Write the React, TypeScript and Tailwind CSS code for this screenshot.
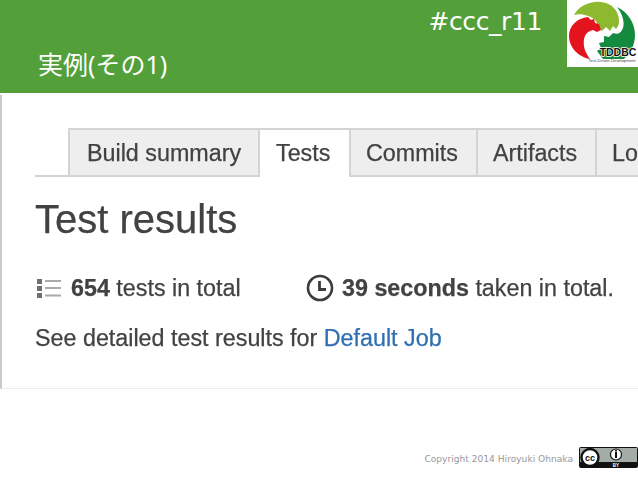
import React from "react";

const tabs = [
  { label: "Build summary", width: "w-[190px]", pad: "pl-[17px]", active: false },
  { label: "Tests", width: "w-[91px]", pad: "pl-[16px]", active: true },
  { label: "Commits", width: "w-[127px]", pad: "pl-[15px]", active: false },
  { label: "Artifacts", width: "w-[119px]", pad: "pl-[15px]", active: false },
  { label: "Log", width: "w-[60px]", pad: "pl-[15px]", active: false },
];

const TddbcLogo = () => (
  <svg width="71" height="67" viewBox="0 0 71 67" className="block">
    <rect width="71" height="67" fill="#fff" />
    {/* light green swirl */}
    <path d="M7 15C12 6 23 1 34 2C45 3 52 11 52 21C52 24 51 27 49 29L46 26L43 31L39 27L35 31L31 27C31 22 27 18 21 16C16 14 11 14 7 15Z" fill="#8DB92E" />
    {/* red swirl */}
    <path d="M2 36C2 26 10 18 21 17L24 20L27 19L28 23L32 24L34 30L30 32L26 30C21 31 18 34 17 39C16 47 18 52 23 59C11 57 2 47 2 36Z" fill="#E3141E" />
    {/* dark green swirl */}
    <path d="M50 7C61 12 68 23 68 35C68 44 64 53 57 59L36 59L30 51L34 48L32 43L37 42L37 36L42 37L46 33C51 35 54 33 56 28C58 22 55 13 50 7Z" fill="#138A3E" />
    <text x="51" y="55.5" fontSize="10.5" fontWeight="700" fill="#111" stroke="#fff" strokeWidth="1.5" paintOrder="stroke" textAnchor="middle" fontFamily="'Liberation Sans', sans-serif">TDDBC</text>
    <text x="45" y="61.5" fontSize="4.2" fill="#444" textAnchor="middle" fontFamily="'Liberation Sans', sans-serif">Test-Driven Development</text>
  </svg>
);

const ListIcon = () => (
  <svg width="24" height="19" viewBox="0 0 24 19" className="ml-[2px] block">
    <rect x="0" y="0" width="5" height="5" fill="#6f6f6f" />
    <rect x="0" y="7" width="5" height="5" fill="#6f6f6f" />
    <rect x="0" y="14" width="5" height="5" fill="#6f6f6f" />
    <rect x="8" y="1" width="16" height="2" fill="#aaa" />
    <rect x="8" y="8" width="16" height="2" fill="#aaa" />
    <rect x="8" y="15.5" width="16" height="2" fill="#aaa" />
  </svg>
);

const ClockIcon = () => (
  <svg width="28" height="28" viewBox="0 0 28 28" className="block">
    <circle cx="14" cy="14" r="12" fill="none" stroke="#3d3d3d" strokeWidth="2.6" />
    <path d="M13.5 7V15.5H20" fill="none" stroke="#3d3d3d" strokeWidth="2.8" />
  </svg>
);

const CcBadge = () => (
  <svg width="59" height="21" viewBox="0 0 59 21" className="block">
    <rect x="0.5" y="0.5" width="58" height="20" rx="1" fill="#a3aca5" stroke="#111" />
    <path d="M1 15H58V20H1Z" fill="#111" />
    <circle cx="11" cy="10.5" r="8.5" fill="#fff" stroke="#111" strokeWidth="2.4" />
    <text x="11" y="13.5" fontSize="9" fontWeight="700" textAnchor="middle" fill="#111" fontFamily="'Liberation Sans', sans-serif">cc</text>
    <circle cx="37" cy="7.5" r="5.5" fill="#fff" stroke="#111" strokeWidth="1.2" />
    <rect x="36" y="5" width="2" height="6" fill="#111" />
    <circle cx="37" cy="3.8" r="1" fill="#111" />
    <text x="37" y="19.5" fontSize="4.5" fontWeight="700" textAnchor="middle" fill="#fff" fontFamily="'Liberation Sans', sans-serif">BY</text>
  </svg>
);

export default function App() {
  return (
    <div className="w-[638px] h-[479px] bg-white overflow-hidden flex flex-col font-['Liberation_Sans',sans-serif]">
      {/* green title bar */}
      <header className="h-[93px] shrink-0 bg-[#539f3a] flex justify-between text-white">
        <h1 className="pl-[38px] pt-[49px] text-[25px] leading-[30px] font-['Noto_Sans','Noto_Sans_CJK_JP',sans-serif] font-normal whitespace-nowrap">
          実例(その1)
        </h1>
        <div className="flex items-start">
          <span className="mr-[25px] mt-[6px] text-[25px] leading-[32px] font-['DejaVu_Sans',sans-serif] tracking-[-0.4px]">
            #ccc_r11
          </span>
          <TddbcLogo />
        </div>
      </header>

      {/* screenshot of the build page */}
      <section className="mt-[2px] h-[294px] shrink-0 border-l-2 border-b border-l-[#c9c9c9] border-b-[#ececec] pl-[33px] pt-[33px] text-[#424242] [-webkit-text-stroke:0.25px] blur-[0.3px]">
        <nav className="flex items-stretch h-[49px] border-b-2 border-[#d4d4d4] pl-[33px]">
          {tabs.map((tab) => (
            <div
              key={tab.label}
              className={
                tab.active
                  ? `${tab.width} ${tab.pad} shrink-0 h-[49px] border-t-2 border-l-2 border-[#d4d4d4] bg-white pt-[8px] text-[23.3px] leading-[30px]`
                  : `${tab.width} ${tab.pad} shrink-0 border-t-2 border-l-2 border-[#d4d4d4] bg-[#eeeeee] pt-[8px] text-[23.3px] leading-[30px]`
              }
            >
              {tab.label}
            </div>
          ))}
        </nav>

        <h2 className="mt-[20px] text-[40px] leading-[44px] font-normal">Test results</h2>

        <div className="mt-[32px] flex items-center h-[30px] text-[23.3px]">
          <ListIcon />
          <span className="ml-[10px] w-[235px]">
            <b>654</b> tests in total
          </span>
          <ClockIcon />
          <span className="ml-[8px] whitespace-nowrap">
            <b>39 seconds</b> taken in total.
          </span>
        </div>

        <p className="mt-[20px] text-[23.3px] leading-[30px] whitespace-nowrap">
          See detailed test results for <span className="text-[#2f6fb0]">Default Job</span>
        </p>
      </section>

      {/* footer */}
      <footer className="mt-[58px] flex items-center justify-end">
        <span className="mr-[6px] mt-[4px] text-[9.1px] text-[#999] font-['DejaVu_Sans',sans-serif]">
          Copyright 2014 Hiroyuki Ohnaka
        </span>
        <CcBadge />
      </footer>
    </div>
  );
}
